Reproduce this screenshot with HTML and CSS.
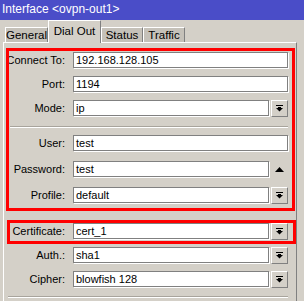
FILE: index.html
```html
<!DOCTYPE html>
<html>
<head>
<meta charset="utf-8">
<link rel="stylesheet" href="styles.css">
</head>
<body>
<div class="window">
  <div class="titlebar">Interface &lt;ovpn-out1&gt;</div>
  <div class="tabs">
    <div class="tab t-general">General</div>
    <div class="tab active t-dial">Dial Out</div>
    <div class="tab t-status">Status</div>
    <div class="tab t-traffic">Traffic</div>
  </div>
  <div class="panel">
    <div class="group g1">
      <div class="row"><span class="label">Connect To:</span><span class="field">192.168.128.105</span></div>
      <div class="row"><span class="label">Port:</span><span class="field">1194</span></div>
      <div class="row"><span class="label">Mode:</span><span class="field">ip</span><span class="btn"><svg width="7" height="7" viewBox="0 0 7 7"><rect x="0" y="0" width="7" height="1" fill="#000"/><rect x="2" y="2" width="3" height="1" fill="#000"/><polygon points="0,3 7,3 3.5,6.5" fill="#000"/></svg></span></div>
    </div>
    <div class="sep sep1"></div>
    <div class="group g2">
      <div class="row"><span class="label">User:</span><span class="field">test</span></div>
      <div class="row r-pass"><span class="label">Password:</span><span class="field">test</span><span class="updn"><svg width="9" height="5" viewBox="0 0 9 5"><polygon points="4.5,0 9,5 0,5" fill="#000"/></svg></span></div>
      <div class="row r-prof"><span class="label">Profile:</span><span class="field">default</span><span class="btn"><svg width="7" height="7" viewBox="0 0 7 7"><rect x="0" y="0" width="7" height="1" fill="#000"/><rect x="2" y="2" width="3" height="1" fill="#000"/><polygon points="0,3 7,3 3.5,6.5" fill="#000"/></svg></span></div>
    </div>
    <div class="group g3">
      <div class="row"><span class="label">Certificate:</span><span class="field">cert_1</span><span class="btn"><svg width="7" height="7" viewBox="0 0 7 7"><rect x="0" y="0" width="7" height="1" fill="#000"/><rect x="2" y="2" width="3" height="1" fill="#000"/><polygon points="0,3 7,3 3.5,6.5" fill="#000"/></svg></span></div>
      <div class="row"><span class="label">Auth.:</span><span class="field">sha1</span><span class="btn"><svg width="7" height="7" viewBox="0 0 7 7"><rect x="0" y="0" width="7" height="1" fill="#000"/><rect x="2" y="2" width="3" height="1" fill="#000"/><polygon points="0,3 7,3 3.5,6.5" fill="#000"/></svg></span></div>
      <div class="row"><span class="label">Cipher:</span><span class="field">blowfish 128</span><span class="btn"><svg width="7" height="7" viewBox="0 0 7 7"><rect x="0" y="0" width="7" height="1" fill="#000"/><rect x="2" y="2" width="3" height="1" fill="#000"/><polygon points="0,3 7,3 3.5,6.5" fill="#000"/></svg></span></div>
    </div>
    <div class="sep sep2"></div>
  </div>
  <div class="mark mark1"></div>
  <div class="mark mark2"></div>
</div>
</body>
</html>
```
FILE: styles.css
```css
html, body {
  margin: 0;
  padding: 0;
  background: #d4d0c8;
}
body {
  font-family: "Liberation Sans", Arial, sans-serif;
  font-size: 11px;
  color: #000;
}
.window {
  position: relative;
  width: 304px;
  height: 301px;
  overflow: hidden;
  background: #d4d0c8;
}
.titlebar {
  height: 20px;
  line-height: 19px;
  background: #4a4dc8;
  color: #fff;
  font-size: 12px;
  padding-left: 2px;
  white-space: nowrap;
}
.tabs {
  display: flex;
  align-items: flex-end;
  height: 22px;
  padding-left: 5px;
  position: relative;
  z-index: 2;
}
.tab {
  box-sizing: border-box;
  height: 15px;
  background: #c5c1b9;
  border-top: 1px solid #fff;
  border-left: 1px solid #fff;
  border-right: 1px solid #808080;
  text-align: center;
  line-height: 15px;
  font-size: 11.5px;
  white-space: nowrap;
}
.t-general { width: 43px; }
.t-dial { width: 53px; }
.t-status { width: 42px; }
.t-traffic { width: 42px; }
.tab.active {
  height: 23px;
  margin-bottom: -1px;
  background: #d4d0c8;
  line-height: 15px;
  padding-top: 3px;
  border-right: 1px solid #808080;
}
.panel {
  box-sizing: border-box;
  margin-left: 3px;
  width: 294px;
  height: 259px;
  border-top: 1px solid #fff;
  border-left: 1px solid #fff;
  border-right: 1px solid #808080;
  padding: 9px 8px 0 0;
}
.row {
  display: flex;
  align-items: center;
  height: 16px;
}
.group .row + .row { margin-top: 8px; }
.g2 .row + .row { margin-top: 10px; }
.g2 .r-prof { margin-top: 9px; }
.label {
  width: 61px;
  text-align: right;
  flex: none;
  margin-right: 8px;
  white-space: nowrap;
}
.field {
  flex: 1;
  box-sizing: border-box;
  height: 16px;
  background: #fff;
  border: 1px solid #808080;
  box-shadow: 1px 1px 0 #fff;
  padding-left: 2px;
  line-height: 14px;
  white-space: nowrap;
}
.btn {
  flex: none;
  box-sizing: border-box;
  width: 17px;
  height: 17px;
  margin-left: 2px;
  border-top: 1px solid #fff;
  border-left: 1px solid #fff;
  border-right: 1px solid #808080;
  border-bottom: 1px solid #808080;
  display: flex;
  align-items: center;
  justify-content: center;
}
.btn svg { display: block; }
.updn {
  flex: none;
  width: 17px;
  height: 16px;
  margin-left: 2px;
  display: flex;
  align-items: center;
  justify-content: center;
}
.updn svg { display: block; }
.sep {
  height: 1px;
  background: #a8a49c;
  border-bottom: 1px solid #fff;
}
.sep1 {
  margin: 10px 0 7px 6px;
}
.g3 { margin-top: 20px; }
.sep2 {
  margin: 9px 0 0 4px;
}
.mark {
  position: absolute;
  box-sizing: border-box;
  border: 3px solid #ff0000;
  pointer-events: none;
}
.mark1 {
  left: 6px;
  top: 48px;
  width: 289px;
  height: 163px;
}
.mark2 {
  left: 7px;
  top: 220px;
  width: 289px;
  height: 24px;
}
```
